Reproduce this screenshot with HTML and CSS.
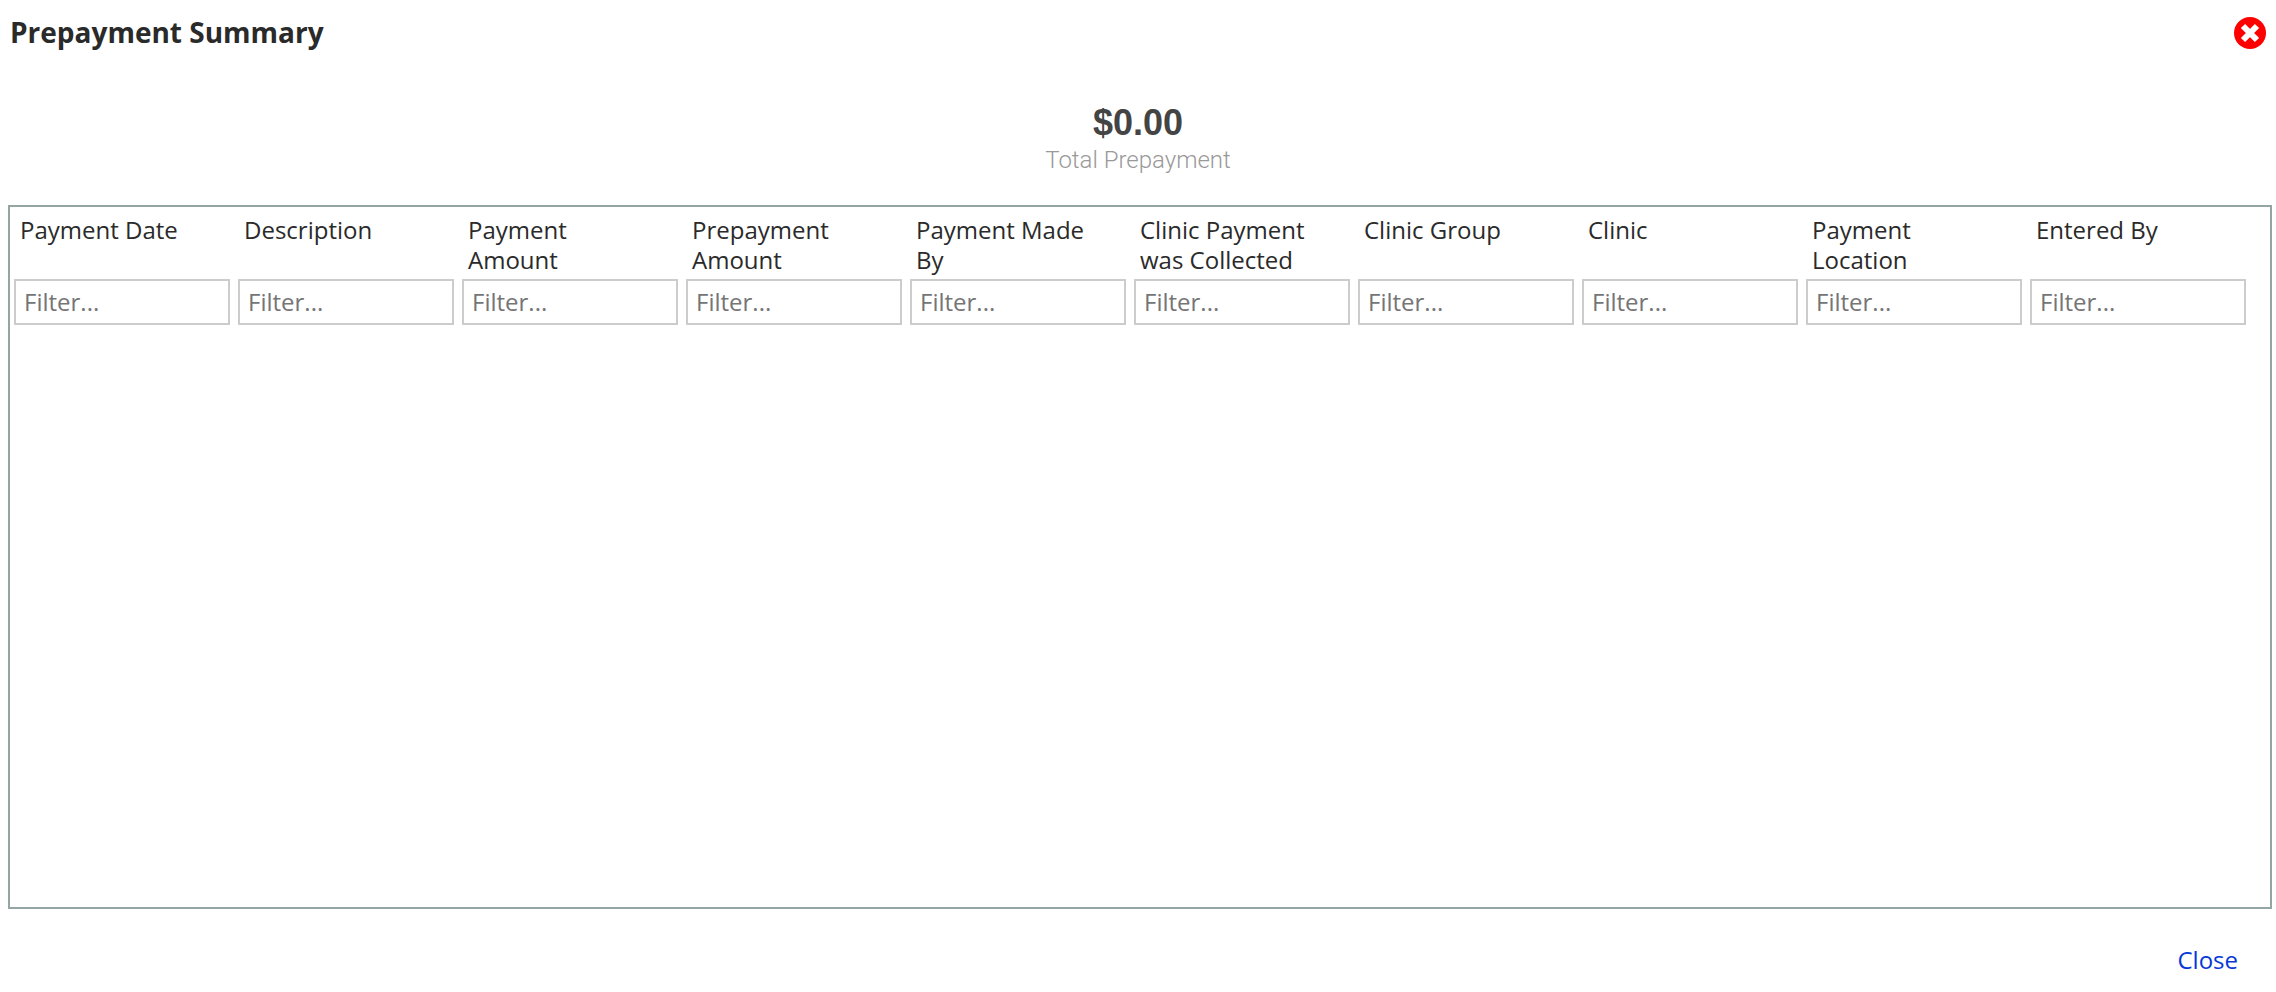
FILE: index.html
```html
<!DOCTYPE html>
<html lang="en">
<head>
<meta charset="utf-8">
<title>Prepayment Summary</title>
<link rel="stylesheet" href="styles.css">
</head>
<body>
<main class="dialog">
  <header class="dialog-header">
    <h1 class="dialog-title">Prepayment Summary</h1>
    <button class="dismiss" type="button" aria-label="Dismiss">
      <svg viewBox="0 0 32 32" width="32" height="32" aria-hidden="true">
        <circle cx="16" cy="16" r="16" fill="#f00"/>
        <path d="M9 9L23 23M23 9L9 23" stroke="#fff" stroke-width="6"/>
      </svg>
    </button>
  </header>
  <section class="total">
    <div class="total-amount">$0.00</div>
    <div class="total-label">Total Prepayment</div>
  </section>
  <section class="grid">
    <table class="grid-table">
      <thead>
        <tr class="names">
          <th scope="col" id="c1">Payment Date</th>
          <th scope="col" id="c2">Description</th>
          <th scope="col" id="c3">Payment Amount</th>
          <th scope="col" id="c4">Prepayment Amount</th>
          <th scope="col" id="c5">Payment Made By</th>
          <th scope="col" id="c6">Clinic Payment was Collected</th>
          <th scope="col" id="c7">Clinic Group</th>
          <th scope="col" id="c8">Clinic</th>
          <th scope="col" id="c9">Payment Location</th>
          <th scope="col" id="c10">Entered By</th>
        </tr>
        <tr class="filters">
          <td><input class="filter" type="text" placeholder="Filter..." aria-labelledby="c1"></td>
          <td><input class="filter" type="text" placeholder="Filter..." aria-labelledby="c2"></td>
          <td><input class="filter" type="text" placeholder="Filter..." aria-labelledby="c3"></td>
          <td><input class="filter" type="text" placeholder="Filter..." aria-labelledby="c4"></td>
          <td><input class="filter" type="text" placeholder="Filter..." aria-labelledby="c5"></td>
          <td><input class="filter" type="text" placeholder="Filter..." aria-labelledby="c6"></td>
          <td><input class="filter" type="text" placeholder="Filter..." aria-labelledby="c7"></td>
          <td><input class="filter" type="text" placeholder="Filter..." aria-labelledby="c8"></td>
          <td><input class="filter" type="text" placeholder="Filter..." aria-labelledby="c9"></td>
          <td><input class="filter" type="text" placeholder="Filter..." aria-labelledby="c10"></td>
        </tr>
      </thead>
    </table>
  </section>
  <footer class="dialog-footer">
    <button class="close" type="button">Close</button>
  </footer>
</main>
</body>
</html>
```
FILE: styles.css
```css
* {
  box-sizing: border-box;
}

body {
  margin: 0;
  background: #fff;
  color: #2a2a2a;
  font: 24px/30px "Open Sans", "Noto Sans", sans-serif;
}

.dialog {
  display: flex;
  flex-direction: column;
  min-height: 100vh;
}

.dialog-header {
  display: flex;
  align-items: center;
  justify-content: space-between;
  padding: 13px 10px;
}

.dialog-title {
  margin: 0;
  padding-bottom: 2px;
  font-size: 28px;
  line-height: 38px;
  font-weight: 700;
}

.dismiss,
.close {
  padding: 0;
  border: 0;
  background: none;
  font: inherit;
  cursor: pointer;
}

.dismiss svg {
  display: block;
}

.total {
  padding: 37px 0 28px;
  text-align: center;
}

.total-amount {
  color: #444;
  font: 700 36px/40px "Liberation Sans", Arial, sans-serif;
}

.total-label {
  color: #999;
  font: 300 24px/34px Roboto, sans-serif;
}

.grid {
  flex: 1;
  margin: 0 4px 0 8px;
  padding-right: 20px;
  border: 2px solid #95a5a3;
}

.grid-table {
  width: 100%;
  table-layout: fixed;
  border-collapse: collapse;
}

.names th {
  padding: 8px 40px 4px 10px;
  font-weight: 400;
  text-align: left;
  vertical-align: top;
}

.filters td {
  padding: 0 4px;
}

.filter {
  display: block;
  width: 100%;
  height: 46px;
  padding: 0 8px 2px;
  border: 2px solid #ccc;
  border-radius: 0;
  background: #fff;
  color: #2a2a2a;
  font: inherit;
}

.filter::placeholder {
  color: #757575;
}

.dialog-footer {
  display: flex;
  justify-content: flex-end;
  padding: 36px 38px 17px;
}

.close {
  color: #0638d6;
}
```
